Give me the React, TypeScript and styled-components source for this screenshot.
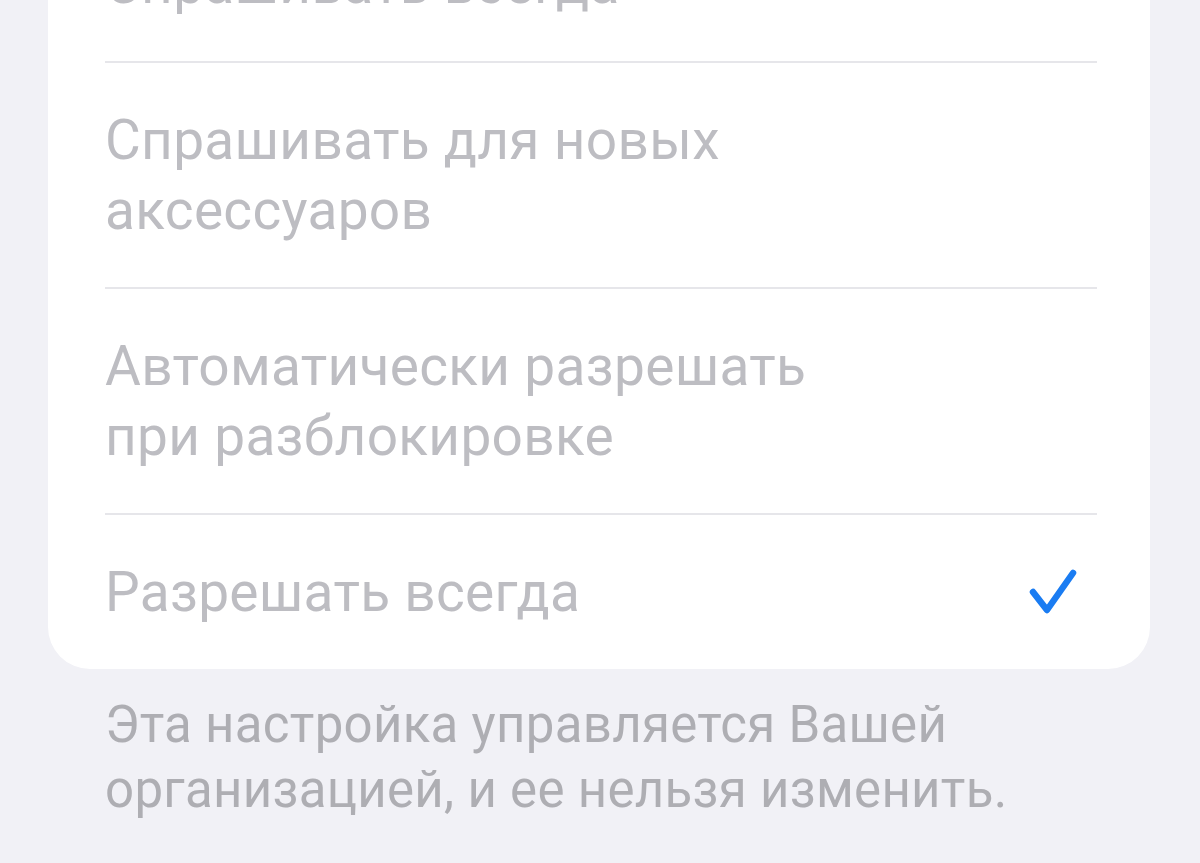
import styled, { createGlobalStyle } from "styled-components";

const GlobalStyle = createGlobalStyle`
  html, body {
    margin: 0;
    padding: 0;
    background: #f1f1f6;
    overflow: hidden;
  }
  body {
    font-family: Roboto, "Noto Sans", "Liberation Sans", sans-serif;
  }
`;

const Screen = styled.div`
  width: 1200px;
  height: 863px;
  overflow: hidden;
  background: #f1f1f6;
`;

const Card = styled.div`
  margin: -93px 50px 0 48px;
  background: #ffffff;
  border-radius: 0 0 42px 42px;
  padding: 0 53px 0 57px;
`;

const Row = styled.div<{ $last?: boolean }>`
  display: flex;
  align-items: center;
  justify-content: space-between;
  padding: 42px 19px 42px 0;
  border-bottom: ${(p) => (p.$last ? "none" : "2px solid #e6e6ea")};
`;

const Label = styled.div`
  font-size: 55px;
  line-height: 70px;
  color: #bdbdc2;
  letter-spacing: 0.3px;
`;

const Check = styled.svg`
  width: 50px;
  height: 50px;
  flex-shrink: 0;
`;

const Footer = styled.div`
  padding: 23px 60px 0 105px;
  font-size: 51px;
  line-height: 65px;
  color: #aeaeb3;
  letter-spacing: 0.3px;
`;

const options = [
  "Спрашивать всегда",
  "Спрашивать для новых\nаксессуаров",
  "Автоматически разрешать\nпри разблокировке",
  "Разрешать всегда",
];

function App() {
  const selected = 3;
  return (
    <Screen>
      <GlobalStyle />
      <Card>
        {options.map((text, i) => (
          <Row key={i} $last={i === options.length - 1}>
            <Label>
              {text.split("\n").map((line, j) => (
                <div key={j}>{line}</div>
              ))}
            </Label>
            {i === selected ? (
              <Check viewBox="0 0 50 50">
                <path
                  d="M5 25 L19 43 L45 6"
                  fill="none"
                  stroke="#1a7cf2"
                  strokeWidth="6.5"
                  strokeLinecap="round"
                  strokeLinejoin="round"
                />
              </Check>
            ) : null}
          </Row>
        ))}
      </Card>
      <Footer>
        Эта настройка управляется Вашей
        <br />
        организацией, и ее нельзя изменить.
      </Footer>
    </Screen>
  );
}

export default App;
